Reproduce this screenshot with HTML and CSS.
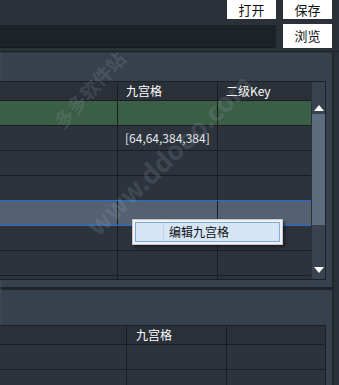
FILE: index.html
```html
<!DOCTYPE html>
<html lang="zh">
<head>
<meta charset="utf-8">
<link rel="stylesheet" href="styles.css">
</head>
<body>
<div class="page">
  <div class="top">
    <div class="toprow">
      <div class="spacer"></div>
      <button class="btn">打开</button>
      <button class="btn">保存</button>
    </div>
    <div class="toprow row2">
      <div class="input"></div>
      <button class="btn tall">浏览</button>
    </div>
  </div>

  <div class="panel p1">
    <div class="phead"></div>
    <div class="table t1">
      <div class="grid">
        <div class="row head"><div class="c c1"></div><div class="c c2">九宫格</div><div class="c c3">二级Key</div></div>
        <div class="row green"><div class="c c1"></div><div class="c c2"></div><div class="c c3"></div></div>
        <div class="row"><div class="c c1"></div><div class="c c2 num">[64,64,384,384]</div><div class="c c3"></div></div>
        <div class="row"><div class="c c1"></div><div class="c c2"></div><div class="c c3"></div></div>
        <div class="row"><div class="c c1"></div><div class="c c2"></div><div class="c c3"></div></div>
        <div class="row sel"><div class="c c1"></div><div class="c c2"></div><div class="c c3"></div></div>
        <div class="row"><div class="c c1"></div><div class="c c2"></div><div class="c c3"></div></div>
        <div class="row"><div class="c c1"></div><div class="c c2"></div><div class="c c3"></div></div>
        <div class="row part"><div class="c c1"></div><div class="c c2"></div><div class="c c3"></div></div>
      </div>
      <div class="sbar">
        <div class="arrow up"></div>
        <div class="thumb"></div>
        <div class="track"></div>
        <div class="arrow down"></div>
      </div>
    </div>
    <div class="wm wm1">多多软件站</div>
    <div class="wm wm2">www.ddooo.com</div>
    <div class="menu">
      <div class="mitem"><span class="gut"></span><span class="mtext">编辑九宫格</span></div>
    </div>
  </div>

  <div class="panel p2">
    <div class="phead h2"></div>
    <div class="table t2">
      <div class="grid">
        <div class="row head"><div class="c d1"></div><div class="c d2">九宫格</div><div class="c d3"></div></div>
        <div class="row"><div class="c d1"></div><div class="c d2"></div><div class="c d3"></div></div>
        <div class="row"><div class="c d1"></div><div class="c d2"></div><div class="c d3"></div></div>
      </div>
    </div>
  </div>
</div>
</body>
</html>
```

FILE: styles.css
```css
* { box-sizing: border-box; }
html, body { margin: 0; padding: 0; }
body {
  width: 339px;
  height: 385px;
  overflow: hidden;
  background: #2a3139;
  font-family: "Noto Sans CJK SC", "Noto Sans", sans-serif;
}
.page {
  width: 339px;
  height: 385px;
  display: flex;
  flex-direction: column;
  overflow: hidden;
}
.top {
  height: 52px;
  display: flex;
  flex-direction: column;
  border-bottom: 1px solid #1d2227;
  flex: none;
}
.toprow {
  display: flex;
  gap: 7px;
  padding-right: 7px;
  height: 19px;
}
.row2 {
  margin-top: 5px;
  height: 24px;
}
.spacer { flex: 1; }
.input {
  flex: 1;
  height: 23px;
  margin-top: 1px;
  background: #1d2228;
  border-bottom: 1px solid #171a1f;
}
.btn {
  width: 49px;
  height: 19px;
  border: none;
  margin: 0;
  padding: 0;
  background: #ffffff;
  color: #111;
  font-family: "Noto Sans CJK SC", sans-serif;
  font-size: 13px;
  line-height: 19px;
}
.btn.tall { height: 24px; line-height: 24px; }

.panel {
  position: relative;
  width: 334px;
  background: #36414d;
  border-right: 2px solid #222830;
  border-left: 2px solid #3b4653;
  flex: none;
}
.p1 {
  height: 236px;
  border-top: 1px solid #2e363f;
  border-bottom: 1px solid #1f242a;
}
.p2 {
  height: 97px;
  border-top: 2px solid #1f252b;
}
.phead { height: 28px; }
.phead.h2 { height: 35px; }

.table {
  display: flex;
  width: 326px;
  margin-left: -2px;
  background: #2c333c;
  border-top: 1px solid #1c2126;
  border-right: 1px solid #1c2126;
}
.t1 { height: 199px; border-bottom: 1px solid #1c2126; }
.t2 { height: 70px; }
.grid { flex: 1; display: flex; flex-direction: column; overflow: hidden; }
.row {
  display: flex;
  height: 25px;
  flex: none;
  border-bottom: 1px solid #1a1e23;
}
.row.head { height: 19px; background: #2a3038; }
.row.green { background: #3b5e46; }
.row.sel {
  background: #536172;
  border-top: 1px solid #1f6fd6;
  border-bottom: 1px solid #1f6fd6;
  margin-top: -1px;
  height: 26px;
}
.row.part { height: 6px; border-bottom: none; }
.c {
  border-right: 1px solid #1a1e23;
  color: #ffffff;
  font-size: 12px;
  line-height: 18px;
  padding-left: 8px;
  white-space: nowrap;
}
.row:not(.head) .c { line-height: 24px; }
.c1 { width: 118px; }
.c2 { width: 100px; }
.c3 { flex: 1; border-right: none; }
.num { color: #e6e9ed; padding-left: 7px; }
.d1 { width: 127px; }
.d2 { width: 100px; padding-left: 9px; }
.d3 { flex: 1; border-right: none; }

.sbar {
  width: 14px;
  display: flex;
  flex-direction: column;
  align-items: center;
  background: #39434f;
  padding-top: 19px;
  border-left: 1px solid #2a3139;
}
.arrow { width: 0; height: 0; flex: none; }
.arrow.up {
  margin-top: 4px;
  border-left: 5px solid transparent;
  border-right: 5px solid transparent;
  border-bottom: 6px solid #ffffff;
}
.thumb {
  margin-top: 3px;
  width: 13px;
  height: 111px;
  background: #5d6d80;
  flex: none;
}
.track { flex: 1; }
.arrow.down {
  margin-bottom: 6px;
  border-left: 5px solid transparent;
  border-right: 5px solid transparent;
  border-top: 6px solid #ffffff;
}

.menu {
  position: absolute;
  left: 130px;
  top: 166px;
  width: 151px;
  height: 26px;
  background: #f1f1f1;
  border: 1px solid #c8c8c8;
  padding: 2px;
  box-shadow: 2px 2px 3px rgba(0,0,0,0.45);
}
.mitem {
  height: 20px;
  display: flex;
  align-items: center;
  background: #d6e5f6;
  border: 1px solid #7faadf;
}
.gut {
  width: 28px;
  height: 100%;
  border-right: 1px solid #c3d2e4;
}
.mtext {
  padding-left: 5px;
  font-size: 12px;
  color: #111;
  line-height: 18px;
}

.wm {
  position: absolute;
  color: rgba(150, 165, 180, 0.2);
  font-family: "Noto Sans CJK SC", "DejaVu Sans", sans-serif;
  font-weight: bold;
  white-space: nowrap;
  pointer-events: none;
  transform-origin: left center;
}
.wm1 {
  left: 55px;
  top: 58px;
  font-size: 19px;
  transform: rotate(-48deg);
}
.wm2 {
  left: 88px;
  top: 158px;
  font-size: 26px;
  transform: rotate(-44deg);
}
```
